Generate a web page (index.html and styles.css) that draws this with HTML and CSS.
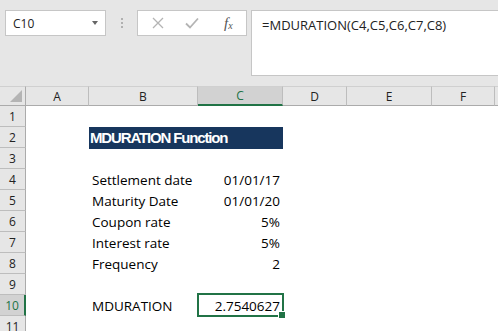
FILE: index.html
```html
<!DOCTYPE html>
<html lang="en">
<head>
  <meta charset="UTF-8" />
  <title>MDURATION Function</title>
  <link rel="stylesheet" href="styles.css">
</head>
<body>

  <div class="toolbar">
    <div class="name-box">
      <span>C10</span>
      <span class="caret"></span>
    </div>
    <div class="grip"><i></i><i></i><i></i></div>
    <div class="fx-box">
      <svg class="ico" width="12" height="12" viewBox="0 0 12 12">
        <path d="M1 1 L11 11 M11 1 L1 11" stroke="#b4b4b4" stroke-width="1.3" fill="none" />
      </svg>
      <svg class="ico" width="14" height="12" viewBox="0 0 14 12">
        <path d="M1 6.5 L5 10.5 L13 1.5" stroke="#b4b4b4" stroke-width="1.8" fill="none" />
      </svg>
      <span class="fx">f<sub>x</sub></span>
    </div>
    <div class="formula">=MDURATION(C4,C5,C6,C7,C8)</div>
  </div>

  <div class="sheet">
    <div class="corner"><span></span></div>
    <div class="col-head">A</div>
    <div class="col-head">B</div>
    <div class="col-head selected">C</div>
    <div class="col-head">D</div>
    <div class="col-head">E</div>
    <div class="col-head">F</div>
    <div class="col-head last"></div>

    <div class="row-head">1</div>
    <div class="cell full"></div>

    <div class="row-head">2</div>
    <div class="cell"></div>
    <div class="cell title">MDURATION Function</div>
    <div class="cell rest"></div>

    <div class="row-head">3</div>
    <div class="cell full"></div>

    <div class="row-head">4</div>
    <div class="cell"></div>
    <div class="cell">Settlement date</div>
    <div class="cell num">01/01/17</div>
    <div class="cell rest"></div>

    <div class="row-head">5</div>
    <div class="cell"></div>
    <div class="cell">Maturity Date</div>
    <div class="cell num">01/01/20</div>
    <div class="cell rest"></div>

    <div class="row-head">6</div>
    <div class="cell"></div>
    <div class="cell">Coupon rate</div>
    <div class="cell num">5%</div>
    <div class="cell rest"></div>

    <div class="row-head">7</div>
    <div class="cell"></div>
    <div class="cell">Interest rate</div>
    <div class="cell num">5%</div>
    <div class="cell rest"></div>

    <div class="row-head">8</div>
    <div class="cell"></div>
    <div class="cell">Frequency</div>
    <div class="cell num">2</div>
    <div class="cell rest"></div>

    <div class="row-head">9</div>
    <div class="cell full"></div>

    <div class="row-head selected">10</div>
    <div class="cell"></div>
    <div class="cell">MDURATION</div>
    <div class="cell num active">2.7540627<span class="handle"></span></div>
    <div class="cell rest"></div>

    <div class="row-head">11</div>
    <div class="cell full"></div>
  </div>

</body>
</html>
```

FILE: styles.css
```css
* {
  box-sizing: border-box;
}
body {
  margin: 0;
  width: 498px;
  height: 331px;
  overflow: hidden;
  background: #fff;
  font-family: 'Open Sans', sans-serif;
  color: #000;
}

/* formula bar */
.toolbar {
  height: 86px;
  background: #e6e6e6;
  padding: 10px 0 0 5px;
  display: flex;
  align-items: flex-start;
}
.name-box {
  width: 101px;
  height: 26px;
  background: #fff;
  border: 1px solid #c6c6c6;
  display: flex;
  align-items: center;
  justify-content: space-between;
  padding: 0 7px 0 7px;
  font-size: 12px;
  color: #222;
}
.caret {
  width: 0;
  height: 0;
  border-left: 3.5px solid transparent;
  border-right: 3.5px solid transparent;
  border-top: 4px solid #666;
}
.grip {
  width: 31px;
  height: 26px;
  display: flex;
  flex-direction: column;
  align-items: center;
  justify-content: center;
  gap: 2px;
}
.grip i {
  width: 2px;
  height: 2px;
  background: #b0b0b0;
}
.fx-box {
  width: 110px;
  height: 26px;
  background: #fff;
  border: 1px solid #c6c6c6;
  display: flex;
  align-items: center;
  padding-left: 14px;
  gap: 21px;
}
.fx {
  font-family: 'Liberation Serif', serif;
  font-style: italic;
  font-size: 15px;
  color: #555;
  margin-left: 4px;
}
.fx sub {
  font-size: 10px;
  vertical-align: 0;
  position: relative;
  top: 1px;
}
.formula {
  flex: 1;
  height: 66px;
  margin-left: 4px;
  background: #fff;
  border: 1px solid #c6c6c6;
  border-right: none;
  padding: 5px 0 0 10px;
  font-size: 13px;
  color: #222;
}

/* sheet grid */
.sheet {
  display: grid;
  grid-template-columns: 26px 63px 109px 85px 64px 85px 63px 1fr;
  grid-template-rows: 20px repeat(11, 21px);
}
.corner {
  background: #e6e6e6;
  border-top: 1px solid #d0d0d0;
  border-right: 1px solid #ababab;
  border-bottom: 1px solid #ababab;
  position: relative;
}
.corner span {
  position: absolute;
  right: 3px;
  bottom: 3px;
  width: 0;
  height: 0;
  border-left: 12px solid transparent;
  border-bottom: 12px solid #b4b4b4;
}
.col-head {
  background: #e6e6e6;
  border-top: 1px solid #d0d0d0;
  border-right: 1px solid #bdbdbd;
  border-bottom: 1px solid #ababab;
  font-size: 12px;
  color: #222;
  display: flex;
  align-items: center;
  justify-content: center;
}
.col-head.last {
  border-right: none;
}
.col-head.selected {
  background: #d2d2d2;
  border-bottom: 2px solid #217346;
  color: #217346;
}
.row-head {
  grid-column: 1;
  background: #e6e6e6;
  border-right: 1px solid #ababab;
  border-bottom: 1px solid #bdbdbd;
  font-size: 12px;
  color: #222;
  display: flex;
  align-items: center;
  justify-content: center;
}
.row-head.selected {
  background: #d2d2d2;
  border-right: 2px solid #217346;
  color: #217346;
}
.cell {
  display: flex;
  align-items: flex-end;
  padding: 0 3px 1px;
  font-size: 13.5px;
  line-height: 18px;
  white-space: nowrap;
}
.cell.full {
  grid-column: 2 / -1;
}
.cell.rest {
  grid-column: 5 / -1;
}
.cell.num {
  justify-content: flex-end;
}
.cell.title {
  grid-column: span 2;
  margin-bottom: -1px;
  background: #17365d;
  color: #fff;
  font-family: 'Liberation Sans', sans-serif;
  font-weight: bold;
  font-size: 15px;
  letter-spacing: -1.15px;
  align-items: center;
  padding-left: 1px;
}
.cell.active {
  position: relative;
}
.cell.active::before {
  content: "";
  position: absolute;
  left: -1px;
  top: -2px;
  right: -1px;
  bottom: -1px;
  border: 2px solid #217346;
}
.handle {
  position: absolute;
  right: -3px;
  bottom: -3px;
  width: 6px;
  height: 6px;
  background: #217346;
  border: 1px solid #fff;
  box-sizing: content-box;
}
```
